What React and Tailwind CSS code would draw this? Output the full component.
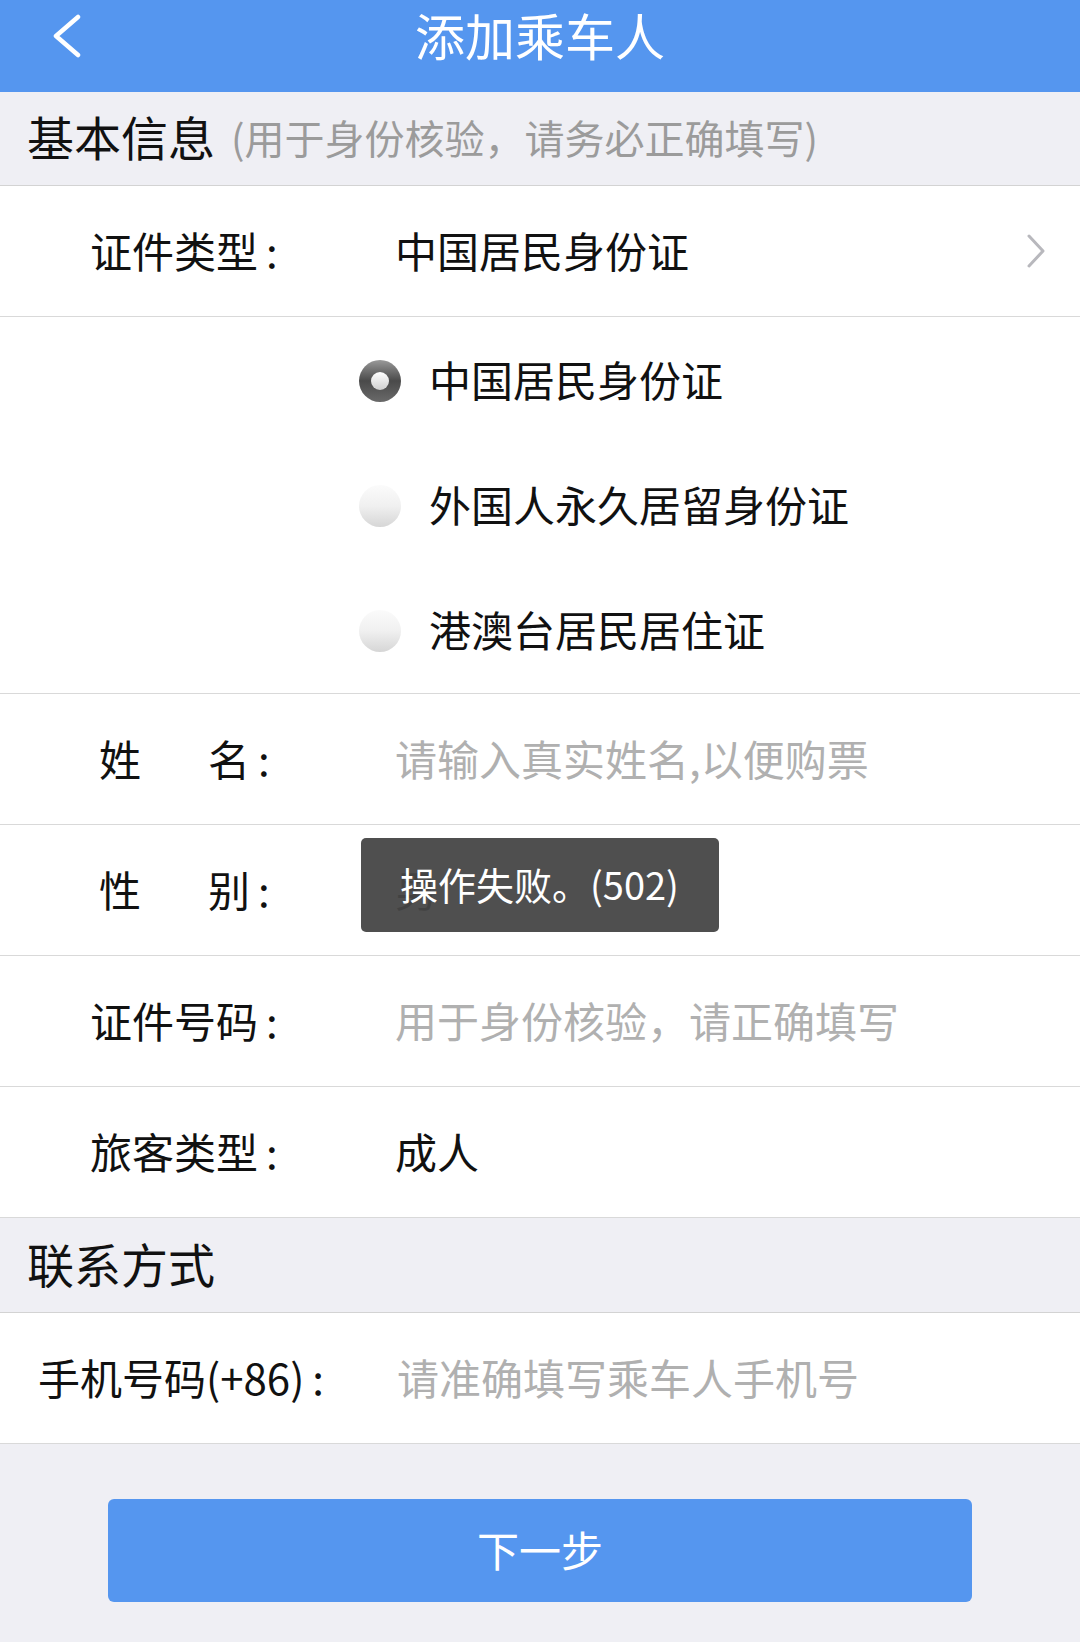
import React from "react";

const font = { fontFamily: '"Noto Sans CJK SC", "Noto Sans", sans-serif' };

const Radio = ({ checked }) =>
  checked ? (
    <span className="flex h-[42px] w-[42px] items-center justify-center rounded-full bg-linear-to-b from-[#9a9a9a] via-[#4a4a4a] to-[#6a6a6a]">
      <span className="h-[18px] w-[18px] rounded-full bg-linear-to-b from-[#ffffff] to-[#cfcfcf]" />
    </span>
  ) : (
    <span className="h-[42px] w-[42px] rounded-full bg-linear-to-b from-[#fbfbfb] via-[#f0f0f0] to-[#d6d6d6]" />
  );

const Row = ({ children, className = "" }) => (
  <div className={"relative flex h-[131px] items-center border-b border-[#d9d9d9] bg-white pb-[4px] " + className}>
    {children}
  </div>
);

const Colon = () => <span className="ml-[8px]">:</span>;

export default function App() {
  return (
    <div className="min-h-[1642px] w-[1080px] bg-[#efeff4] text-[#111]" style={font}>
      {/* header */}
      <div className="relative flex h-[92px] justify-center bg-[#5596ef] pt-[2px]">
        <svg className="absolute left-[46px] top-[14px]" width="40" height="44" viewBox="0 0 40 44" fill="none">
          <polyline points="32,3 10,22 32,41" stroke="white" strokeWidth="4.5" strokeLinecap="round" strokeLinejoin="round" />
        </svg>
        <span className="text-[50px] leading-[64px] text-white">添加乘车人</span>
      </div>

      {/* 基本信息 */}
      <div className="flex h-[94px] items-center border-b border-[#d3d3d3] pl-[27px] pb-[4px]">
        <span className="text-[47px] text-[#111]">基本信息</span>
        <span className="ml-[16px] text-[40px] text-[#9b9b9b]">(用于身份核验，请务必正确填写)</span>
      </div>

      <Row>
        <span className="w-[395px] pl-[90px] text-[42px]">证件类型<Colon /></span>
        <span className="text-[42px]">中国居民身份证</span>
        <svg className="absolute right-[34px] top-[47px]" width="20" height="36" viewBox="0 0 20 36" fill="none">
          <polyline points="3,3 17,18 3,33" stroke="#b8b8bd" strokeWidth="3" strokeLinecap="round" strokeLinejoin="round" />
        </svg>
      </Row>

      {/* radio options */}
      <div className="flex flex-col border-b border-[#d9d9d9] bg-white pt-[1px]">
        {[
          ["中国居民身份证", true],
          ["外国人永久居留身份证", false],
          ["港澳台居民居住证", false],
        ].map(([label, checked]) => (
          <div key={label} className="flex h-[125px] items-center pl-[359px]">
            <Radio checked={checked} />
            <span className="ml-[28px] pb-[4px] text-[42px]">{label}</span>
          </div>
        ))}
      </div>

      <Row>
        <span className="flex w-[395px] pl-[99px] text-[42px]">
          <span>姓</span>
          <span className="ml-[67px]">名<Colon /></span>
        </span>
        <span className="text-[42px] text-[#b0b0b0]">请输入真实姓名,以便购票</span>
      </Row>

      <Row>
        <span className="flex w-[395px] pl-[99px] text-[42px]">
          <span>性</span>
          <span className="ml-[67px]">别<Colon /></span>
        </span>
        <span className="text-[42px]">男</span>
        <div className="absolute left-[361px] top-[13px] flex h-[94px] w-[358px] items-center rounded-[5px] bg-[#464646]/95 pb-[4px] pl-[39px]">
          <span className="text-[38px] text-white">操作失败。(502)</span>
        </div>
      </Row>

      <Row>
        <span className="w-[395px] pl-[90px] text-[42px]">证件号码<Colon /></span>
        <span className="text-[42px] text-[#b0b0b0]">用于身份核验，请正确填写</span>
      </Row>

      <Row>
        <span className="w-[395px] pl-[90px] text-[42px]">旅客类型<Colon /></span>
        <span className="text-[42px]">成人</span>
      </Row>

      {/* 联系方式 */}
      <div className="flex h-[95px] items-center border-b border-[#d3d3d3] pl-[27px] pb-[4px]">
        <span className="text-[47px] text-[#111]">联系方式</span>
      </div>

      <Row>
        <span className="w-[397px] pl-[38px] text-[42px]">手机号码(+86)<Colon /></span>
        <span className="text-[42px] text-[#b0b0b0]">请准确填写乘车人手机号</span>
      </Row>

      <div className="flex justify-center pt-[55px]">
        <button className="flex h-[103px] w-[864px] items-center justify-center rounded-[6px] bg-[#5596ef] pb-[4px] text-[42px] text-white">
          下一步
        </button>
      </div>
    </div>
  );
}
